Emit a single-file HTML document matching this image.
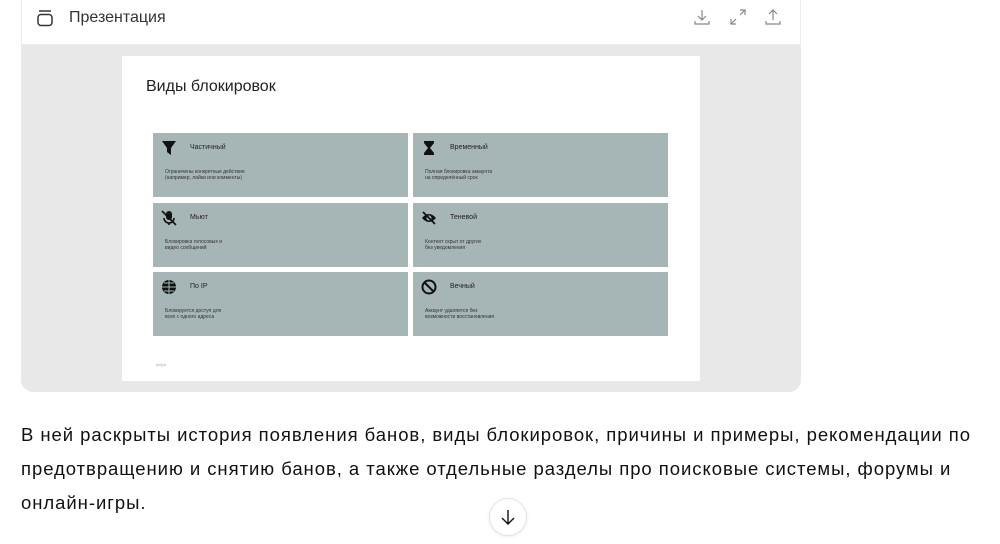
<!DOCTYPE html>
<html><head><meta charset="utf-8"><style>
body{margin:0;width:1000px;height:544px;background:#fff;font-family:"Liberation Sans","DejaVu Sans",sans-serif;position:relative;overflow:hidden;color:#0d0d0d}
.card{position:absolute;left:21px;top:-10px;width:780px;height:402px;border-radius:12px;background:#e8e8e8;overflow:hidden}
.hdr{position:absolute;left:0;top:0;width:780px;height:55px;background:#fff;border:1px solid #ececec;box-sizing:border-box;border-radius:12px 12px 0 0}
.slide{position:absolute;left:101px;top:66px;width:578px;height:325px;background:#fff}
.cell{position:absolute;width:255px;height:64px;background:#a6b5b5}
.cell .t{position:absolute;left:37px;top:11px;font-size:7px;color:#222}
.cell .d{position:absolute;left:12px;top:36px;font-size:5px;line-height:6px;color:#333}
.cell svg{position:absolute;left:8px;top:7px}
p{position:absolute;left:21px;top:418px;margin:0;font-size:18.5px;letter-spacing:0.95px;line-height:34px;color:#111;white-space:nowrap}
</style></head><body>
<div class="card">
 <div class="hdr">
  <svg style="position:absolute;left:13px;top:17px" width="20" height="20" viewBox="0 0 20 20" fill="none" stroke="#333" stroke-width="1.5"><line x1="4" y1="3" x2="16" y2="3"/><rect x="3" y="6.5" width="14" height="11" rx="3"/></svg>
  <div style="position:absolute;left:47px;top:18px;font-size:16px;color:#333">Презентация</div>
  <svg style="position:absolute;left:670px;top:16px" width="20" height="20" viewBox="0 0 20 20" fill="none" stroke="#888" stroke-width="1.2"><path d="M10 3v10M6 9l4 4 4-4M3 14v3h14v-3"/></svg>
  <svg style="position:absolute;left:706px;top:16px" width="20" height="20" viewBox="0 0 20 20" fill="none" stroke="#888" stroke-width="1.2"><path d="M12 3h5v5M17 3l-5 5M8 17H3v-5M3 17l5-5"/></svg>
  <svg style="position:absolute;left:741px;top:16px" width="20" height="20" viewBox="0 0 20 20" fill="none" stroke="#888" stroke-width="1.2"><path d="M10 13V3M6 7l4-4 4 4M3 14v3h14v-3"/></svg>
 </div>
 <div class="slide">
  <div style="position:absolute;left:24px;top:22px;font-size:16px;color:#222">Виды блокировок</div>
  <div class="cell" style="left:31px;top:77px"><svg width="16" height="16" viewBox="0 0 16 16"><path d="M1 1h14l-5 7v7l-4-3V8z" fill="#111"/></svg><div class="t">Частичный</div><div class="d">Ограничены конкретные действия<br>(например, лайки или комменты)</div></div>
  <div class="cell" style="left:291px;top:77px"><svg width="16" height="16" viewBox="0 0 16 16"><path d="M3 1h10v2L9 8l4 5v2H3v-2l4-5-4-5z" fill="#111"/></svg><div class="t">Временный</div><div class="d">Полная блокировка аккаунта<br>на определённый срок</div></div>
  <div class="cell" style="left:31px;top:147px"><svg width="16" height="16" viewBox="0 0 16 16"><rect x="5" y="1" width="6" height="9" rx="3" fill="#111"/><path d="M3 8a5 5 0 0010 0M8 13v2M1 1l14 14" stroke="#111" stroke-width="1.6" fill="none"/></svg><div class="t">Мьют</div><div class="d">Блокировка голосовых и<br>видео сообщений</div></div>
  <div class="cell" style="left:291px;top:147px"><svg width="16" height="16" viewBox="0 0 16 16"><path d="M1 8q7-8 14 0q-7 8-14 0z" fill="#111"/><circle cx="8" cy="8" r="2.5" fill="#a6b5b5"/><path d="M2 2l12 12" stroke="#111" stroke-width="1.8"/></svg><div class="t">Теневой</div><div class="d">Контент скрыт от других<br>без уведомления</div></div>
  <div class="cell" style="left:31px;top:216px"><svg width="16" height="16" viewBox="0 0 16 16"><circle cx="8" cy="8" r="7" fill="#111"/><path d="M1 8h14M8 1v14M3 4h10M3 12h10" stroke="#a6b5b5" stroke-width="1"/></svg><div class="t">По IP</div><div class="d">Блокируется доступ для<br>всех с одного адреса</div></div>
  <div class="cell" style="left:291px;top:216px"><svg width="16" height="16" viewBox="0 0 16 16" fill="none" stroke="#111" stroke-width="2"><circle cx="8" cy="8" r="6.5"/><path d="M3.5 3.5l9 9"/></svg><div class="t">Вечный</div><div class="d">Аккаунт удаляется без<br>возможности восстановления</div></div>
  <div style="position:absolute;left:34px;top:306px;font-size:4px;color:#9ab">petpa</div>
 </div>
</div>
<p>В ней раскрыты история появления банов, виды блокировок, причины и примеры, рекомендации по<br>предотвращению и снятию банов, а также отдельные разделы про поисковые системы, форумы и<br>онлайн-игры.</p>
<div style="position:absolute;left:489px;top:498px;width:36px;height:36px;border:1px solid #e3e3e3;border-radius:50%;background:#fff;box-shadow:0 1px 3px rgba(0,0,0,.08)">
 <svg style="position:absolute;left:8px;top:8px" width="20" height="20" viewBox="0 0 20 20" fill="none" stroke="#111" stroke-width="1.4"><path d="M10 3v14M4 11l6 6 6-6"/></svg>
</div>
</body></html>
